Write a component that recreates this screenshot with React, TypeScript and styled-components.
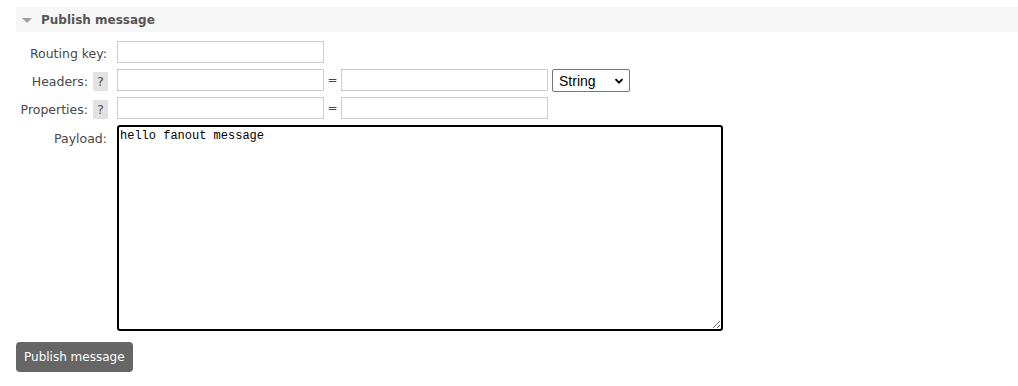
import React from 'react';
import styled, { createGlobalStyle } from 'styled-components';

const GlobalStyle = createGlobalStyle`
  body {
    margin: 0;
    background: #fff;
    font-family: Verdana, "DejaVu Sans", sans-serif;
    font-size: 12px;
    color: #484848;
  }
`;

function App() {
  return (
    <Page>
      <GlobalStyle />
      <SectionHeader>
        <Triangle />
        <HeaderTitle>Publish message</HeaderTitle>
      </SectionHeader>
      <Form>
        <Label>Routing key:</Label>
        <Row>
          <TextInput />
        </Row>

        <Label>
          Headers:<Help>?</Help>
        </Label>
        <Row>
          <TextInput />
          <Equals>=</Equals>
          <TextInput />
          <SelectWrap>
            <Select defaultValue="string">
              <option value="string">String</option>
              <option value="number">Number</option>
              <option value="boolean">Boolean</option>
            </Select>
            <Chevron viewBox="0 0 10 10">
              <path d="M1.5 3.2 L5 6.7 L8.5 3.2" fill="none" stroke="#000" strokeWidth="1.9" />
            </Chevron>
          </SelectWrap>
        </Row>

        <Label>
          Properties:<Help>?</Help>
        </Label>
        <Row>
          <TextInput />
          <Equals>=</Equals>
          <TextInput />
        </Row>

        <Label $top>Payload:</Label>
        <Row>
          <Payload defaultValue="hello fanout message" />
        </Row>
      </Form>
      <Button>Publish message</Button>
    </Page>
  );
}
export default App;

const Page = styled.div`
  padding: 7px 0 0 16px;
`;

const SectionHeader = styled.div`
  display: flex;
  align-items: center;
  height: 25px;
  background: #f7f7f7;
  padding-left: 6px;
`;

const Triangle = styled.span`
  width: 0;
  height: 0;
  border-left: 5px solid transparent;
  border-right: 5px solid transparent;
  border-top: 5px solid #a0a0a0;
  margin-right: 9px;
  margin-top: 1px;
`;

const HeaderTitle = styled.span`
  font-weight: bold;
  font-size: 12px;
  color: #555;
`;

const Form = styled.div`
  display: grid;
  grid-template-columns: 91px auto;
  column-gap: 10px;
  row-gap: 5px;
  margin-top: 9px;
  align-items: center;
`;

const Label = styled.div<{ $top?: boolean }>`
  display: flex;
  justify-content: flex-end;
  align-items: center;
  gap: 5px;
  color: #484848;
  font-size: 12.5px;
  align-self: ${props => props.$top ? 'start' : 'center'};
  padding-top: ${props => props.$top ? '6px' : '2px'};
  white-space: nowrap;
`;

const Help = styled.span`
  display: inline-flex;
  align-items: center;
  justify-content: center;
  width: 15px;
  height: 19px;
  background: #e2e2e2;
  color: #555;
  font-size: 13px;
  margin-right: -1px;
`;

const Row = styled.div`
  display: flex;
  align-items: flex-start;
  min-height: 23px;
`;

const TextInput = styled.input`
  box-sizing: border-box;
  width: 207px;
  height: 22px;
  border: 1px solid #ccc;
  padding: 2px 4px;
  font-family: Verdana, "DejaVu Sans", sans-serif;
  font-size: 12px;
  outline: none;
`;

const Equals = styled.span`
  width: 17px;
  line-height: 22px;
  text-align: center;
  color: #484848;
  font-size: 12px;
`;

const SelectWrap = styled.div`
  position: relative;
  margin-left: 4px;
`;

const Select = styled.select`
  appearance: none;
  box-sizing: border-box;
  width: 78px;
  height: 23px;
  border: 1px solid #767676;
  border-radius: 2px;
  background: #fff;
  padding: 0 0 0 6px;
  font-family: "Liberation Sans", Arial, sans-serif;
  font-size: 14px;
  color: #000;
  outline: none;
`;

const Chevron = styled.svg`
  position: absolute;
  right: 6px;
  top: 7px;
  width: 10px;
  height: 10px;
  pointer-events: none;
`;

const Payload = styled.textarea`
  box-sizing: border-box;
  width: 606px;
  height: 206px;
  border: 2px solid #000;
  border-radius: 3px;
  padding: 2px 0 0 1px;
  font-family: "Liberation Mono", "Courier New", monospace;
  font-size: 12px;
  color: #000;
  resize: both;
  outline: none;
`;

const Button = styled.button`
  margin-top: 11px;
  height: 30px;
  padding: 0 8px;
  background: #666;
  color: #fff;
  border: none;
  border-radius: 4px;
  font-family: Verdana, "DejaVu Sans", sans-serif;
  font-size: 12px;
  cursor: pointer;
`;
